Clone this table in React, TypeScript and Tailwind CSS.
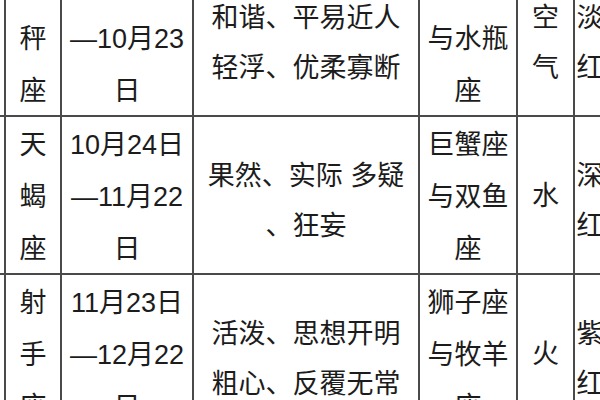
import React from "react";

type Row = { c1: string[]; c2: string[]; c3: string[]; c4: string[]; c5: string[]; c6: string[] };

const rows: Row[] = [
  {
    c1: ["天", "秤", "座"],
    c2: ["9月23日", "—10月23", "日"],
    c3: ["和谐、平易近人", "轻浮、优柔寡断"],
    c4: ["双子座", "与水瓶", "座"],
    c5: ["空", "气"],
    c6: ["淡", "红"],
  },
  {
    c1: ["天", "蝎", "座"],
    c2: ["10月24日", "—11月22", "日"],
    c3: ["果然、实际 多疑", "、狂妄"],
    c4: ["巨蟹座", "与双鱼", "座"],
    c5: ["水"],
    c6: ["深", "红"],
  },
  {
    c1: ["射", "手", "座"],
    c2: ["11月23日", "—12月22", "日"],
    c3: ["活泼、思想开明", "粗心、反覆无常"],
    c4: ["狮子座", "与牧羊", "座"],
    c5: ["火"],
    c6: ["紫", "红"],
  },
];

function Cell({ lines, tall }: { lines: string[]; tall?: boolean }) {
  const cls = tall
    ? "leading-[52px] pt-[3px]"
    : lines.length > 1
      ? "leading-[50px] pt-[11px]"
      : "leading-[50px] pt-[2px]";
  return (
    <div className="bg-white flex items-center justify-center text-center overflow-hidden">
      <div className={cls}>
        {lines.map((l, i) => (
          <div key={i} className="whitespace-pre">
            {l}
          </div>
        ))}
      </div>
    </div>
  );
}

export default function App() {
  return (
    <div
      className="w-[600px] h-[400px] overflow-hidden bg-white text-[#1c1c1c] text-[27px]"
      style={{ fontFamily: '"Liberation Sans", "Noto Sans CJK SC", sans-serif' }}
    >
      <div className="-mt-[41px] grid grid-cols-[4px_54px_130px_224px_96px_55px_30px_20px] grid-rows-[156px_156px_156px] gap-[2px] bg-[#4a4a4a] w-[630px]">
        {rows.map((r, i) => (
          <React.Fragment key={i}>
            <div className="bg-white" />
            <Cell lines={r.c1} tall />
            <Cell lines={r.c2} tall />
            <Cell lines={r.c3} />
            <Cell lines={r.c4} tall />
            <Cell lines={r.c5} />
            <Cell lines={r.c6} />
            <div className="bg-white" />
          </React.Fragment>
        ))}
      </div>
    </div>
  );
}
